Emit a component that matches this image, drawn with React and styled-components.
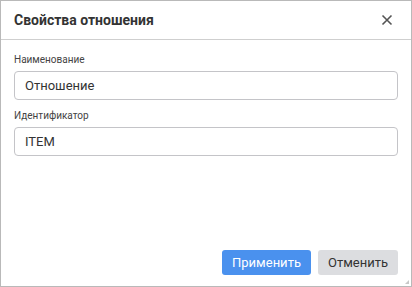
import styled, { createGlobalStyle } from 'styled-components';

const Global = createGlobalStyle`
  html, body {
    margin: 0;
    padding: 0;
    background: #fff;
  }
  body {
    font-family: Roboto, "Liberation Sans", Arial, sans-serif;
  }
`;

const Dialog = styled.div`
  position: relative;
  box-sizing: border-box;
  width: 412px;
  height: 287px;
  border: 1px solid #b9b9b9;
  background: #fff;
  display: flex;
  flex-direction: column;
`;

const Header = styled.div`
  height: 38px;
  border-bottom: 1px solid #cfcfcf;
  display: flex;
  align-items: center;
  justify-content: space-between;
  padding: 0 18px 0 13px;
`;

const Title = styled.h1`
  margin: 0;
  font-size: 14px;
  font-weight: 700;
  color: #333;
`;

const Close = styled.button`
  border: 0;
  background: none;
  padding: 0;
  width: 12px;
  height: 12px;
  display: flex;
  cursor: pointer;
`;

const Body = styled.div`
  flex: 1;
  padding: 14px 13px 0 13px;
  display: flex;
  flex-direction: column;
  gap: 10px;
`;

const Field = styled.label`
  display: flex;
  flex-direction: column;
  gap: 5px;
`;

const Label = styled.span`
  font-size: 10px;
  color: #444;
  line-height: 12px;
`;

const Input = styled.input`
  box-sizing: border-box;
  height: 29px;
  width: 100%;
  border: 1px solid #c4c4c8;
  border-radius: 4px;
  padding: 0 10px;
  font-family: inherit;
  font-size: 13px;
  color: #333;
  outline: none;
`;

const Footer = styled.div`
  display: flex;
  justify-content: flex-end;
  gap: 7px;
  padding: 0 13px 11px 0;
`;

const Button = styled.button`
  height: 25px;
  border: 0;
  border-radius: 3px;
  padding: 0 10px;
  font-family: inherit;
  font-size: 13px;
  background: ${(p) => (p.$primary ? '#4a91ee' : '#dcdde0')};
  color: ${(p) => (p.$primary ? '#fff' : '#333')};
  cursor: pointer;
`;

const Grip = styled.div`
  position: absolute;
  right: 2px;
  bottom: 2px;
  width: 0;
  height: 0;
  border-left: 4px solid transparent;
  border-bottom: 4px solid #c8c8c8;
`;

export default function App() {
  return (
    <>
      <Global />
      <Dialog>
        <Header>
          <Title>Свойства отношения</Title>
          <Close aria-label="Закрыть">
            <svg width="12" height="12" viewBox="0 0 12 12">
              <path d="M1.5 1.5L10.5 10.5M10.5 1.5L1.5 10.5" stroke="#555" strokeWidth="1.6" />
            </svg>
          </Close>
        </Header>
        <Body>
          <Field>
            <Label>Наименование</Label>
            <Input defaultValue="Отношение" />
          </Field>
          <Field>
            <Label>Идентификатор</Label>
            <Input defaultValue="ITEM" />
          </Field>
        </Body>
        <Footer>
          <Button $primary>Применить</Button>
          <Button>Отменить</Button>
        </Footer>
        <Grip />
      </Dialog>
    </>
  );
}
